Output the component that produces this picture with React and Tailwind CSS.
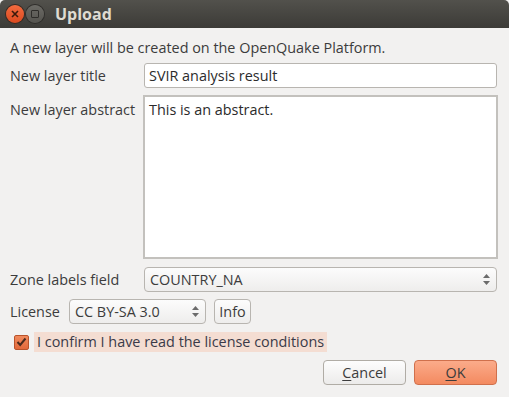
export default function App() {
    const font = { fontFamily: '"Open Sans", "Noto Sans", sans-serif' };

    const Spinner = () => (
        <span className="flex flex-col items-center gap-[3px] text-[#6b6b6b]">
            <svg width="7" height="4" viewBox="0 0 7 4"><path d="M0 4 L3.5 0 L7 4 Z" fill="currentColor" /></svg>
            <svg width="7" height="4" viewBox="0 0 7 4"><path d="M0 0 L3.5 4 L7 0 Z" fill="currentColor" /></svg>
        </span>
    );

    return (
        <div className="w-[509px] h-[397px] bg-[#f2f1f0] text-[#3c3c3c] text-[14.4px] flex flex-col overflow-hidden" style={font}>
            {/* title bar */}
            <div className="h-[28px] shrink-0 flex items-center rounded-t-[5px] bg-gradient-to-b from-[#52514c] to-[#3c3b37] pl-[6px]">
                <div className="w-[18px] h-[18px] rounded-full bg-gradient-to-b from-[#f26a3e] to-[#dc4a1f] flex items-center justify-center shadow-[0_0_0_1px_#3a2a22]">
                    <svg width="8" height="8" viewBox="0 0 8 8"><path d="M1 1 L7 7 M7 1 L1 7" stroke="#3b1a0c" strokeWidth="1.6" /></svg>
                </div>
                <div className="ml-[2px] w-[18px] h-[18px] rounded-full bg-gradient-to-b from-[#6b6a65] to-[#55544f] flex items-center justify-center shadow-[0_0_0_1px_#2f2e2b]">
                    <div className="w-[8px] h-[8px] border-[1.5px] border-[#2e2d2a] rounded-[1px]" />
                </div>
                <span className="ml-[11px] text-[16px] font-bold text-[#dfdbd2]">Upload</span>
            </div>

            <div className="flex-1 flex flex-col pl-[10px] pr-[12px] pt-[10px]">
                <p className="leading-[19px]">A new layer will be created on the OpenQuake Platform.</p>

                <div className="mt-[6px] flex items-center h-[25px]">
                    <span className="w-[134px] shrink-0">New layer title</span>
                    <div className="flex-1 h-[25px] bg-white border border-[#b8b5b0] rounded-[3px] flex items-center px-[4px] text-[#2b2b2b]">
                        SVIR analysis result
                    </div>
                </div>

                <div className="mt-[7px] flex">
                    <span className="w-[133px] shrink-0 pt-[4px]">New layer abstract</span>
                    <div className="flex-1 h-[164px] bg-white border-2 border-[#c3c1bd] px-[4px] pt-[2px] text-[#2b2b2b] -mr-[1px]">
                        This is an abstract.
                    </div>
                </div>

                <div className="mt-[8px] flex items-center h-[25px]">
                    <span className="w-[134px] shrink-0">Zone labels field</span>
                    <div className="flex-1 h-[25px] bg-gradient-to-b from-[#fcfcfc] to-[#eeedec] border border-[#b8b5b0] rounded-[4px] flex items-center justify-between pl-[5px] pr-[6px]">
                        <span>COUNTRY_NA</span>
                        <Spinner />
                    </div>
                </div>

                <div className="mt-[7px] flex items-center h-[25px]">
                    <span className="w-[59px] shrink-0">License</span>
                    <div className="w-[137px] h-[25px] bg-gradient-to-b from-[#fcfcfc] to-[#eeedec] border border-[#b8b5b0] rounded-[4px] flex items-center justify-between pl-[5px] pr-[6px]">
                        <span>CC BY-SA 3.0</span>
                        <Spinner />
                    </div>
                    <div className="ml-[8px] w-[37px] h-[25px] bg-gradient-to-b from-[#fcfcfc] to-[#eeedec] border border-[#b8b5b0] rounded-[4px] flex items-center justify-center">
                        Info
                    </div>
                </div>

                <div className="mt-[8px] flex items-center h-[20px]">
                    <div className="ml-[4px] w-[15px] h-[15px] rounded-[2px] bg-gradient-to-b from-[#f08a5d] to-[#e2683a] border border-[#b9532b] flex items-center justify-center">
                        <svg width="11" height="10" viewBox="0 0 11 10"><path d="M1.5 5 L4.2 8 L9.5 1.5" fill="none" stroke="#4a2a1e" strokeWidth="2" /></svg>
                    </div>
                    <span className="ml-[5px] h-[20px] flex items-center bg-[#f4ddd2] px-[3px] text-[#3a3a48]">I confirm I have read the license conditions</span>
                </div>

                <div className="mt-[8px] flex justify-end gap-[8px]">
                    <div className="w-[83px] h-[25px] bg-gradient-to-b from-[#fdfdfd] to-[#ecebea] border border-[#b0aca5] rounded-[4px] flex items-center justify-center">
                        <span><span className="underline underline-offset-2">C</span>ancel</span>
                    </div>
                    <div className="w-[83px] h-[25px] bg-gradient-to-b from-[#fbab8a] to-[#f38a60] border border-[#d0704c] rounded-[4px] flex items-center justify-center">
                        <span><span className="underline underline-offset-2">O</span>K</span>
                    </div>
                </div>
            </div>
        </div>
    );
}
